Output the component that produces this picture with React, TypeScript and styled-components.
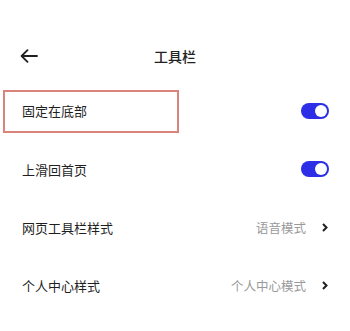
import React from "react";
import styled, { createGlobalStyle } from "styled-components";

const Global = createGlobalStyle`
  html, body { margin: 0; padding: 0; background: #ffffff; }
  body { font-family: "Noto Sans CJK SC", "Noto Sans", sans-serif; color: #1f1f1f; }
`;

const Page = styled.div`
  width: 350px;
  height: 331px;
  background: #fff;
  overflow: hidden;
  display: flex;
  flex-direction: column;
`;

const Header = styled.div`
  margin-top: 38px;
  height: 36px;
  display: grid;
  grid-template-columns: 60px 1fr 60px;
  align-items: center;
`;

const BackButton = styled.div`
  padding-left: 20px;
  display: flex;
  align-items: center;
`;

const Title = styled.div`
  text-align: center;
  font-size: 14px;
  font-weight: 500;
  color: #222;
`;

const List = styled.div`
  margin-top: 8px;
  display: flex;
  flex-direction: column;
`;

const Row = styled.div`
  height: 58px;
  display: flex;
  align-items: center;
  justify-content: space-between;
  padding-right: 21px;
`;

const Label = styled.div<{ $highlight?: boolean }>`
  box-sizing: border-box;
  display: flex;
  align-items: center;
  font-size: 13px;
  color: #1f1f1f;
  ${(p) =>
    p.$highlight
      ? `
    margin-left: 3px;
    width: 176px;
    height: 43px;
    border: 2px solid #d9837b;
    padding-left: 17px;
    padding-bottom: 1px;
  `
      : `
    padding-left: 22px;
  `}
`;

const Toggle = styled.div<{ $on: boolean }>`
  width: 28px;
  height: 16px;
  border-radius: 8px;
  background: ${(p) => (p.$on ? "#2c2fe5" : "#ccc")};
  display: flex;
  align-items: center;
  justify-content: ${(p) => (p.$on ? "flex-end" : "flex-start")};
  padding: 0 2px;
  box-sizing: border-box;
`;

const Knob = styled.div`
  width: 12px;
  height: 12px;
  border-radius: 50%;
  background: #fff;
`;

const Right = styled.div`
  display: flex;
  align-items: center;
  gap: 16px;
  padding-right: 1px;
`;

const Value = styled.span`
  font-size: 12.5px;
  color: #9a9a9a;
`;

const Chevron = () => (
  <svg width="6" height="9" viewBox="0 0 6 9">
    <polyline points="1,1 4.5,4.5 1,8" fill="none" stroke="#1f1f1f" strokeWidth="2" />
  </svg>
);

const BackArrow = () => (
  <svg width="18" height="14" viewBox="0 0 18 14">
    <path d="M17 7H2M7.5 1.2L1.6 7l5.9 5.8" fill="none" stroke="#1f1f1f" strokeWidth="1.8" strokeLinecap="round" strokeLinejoin="round" />
  </svg>
);

export default function App() {
  return (
    <Page>
      <Global />
      <Header>
        <BackButton>
          <BackArrow />
        </BackButton>
        <Title>工具栏</Title>
        <div />
      </Header>
      <List>
        <Row>
          <Label $highlight>固定在底部</Label>
          <Toggle $on>
            <Knob />
          </Toggle>
        </Row>
        <Row>
          <Label>上滑回首页</Label>
          <Toggle $on>
            <Knob />
          </Toggle>
        </Row>
        <Row>
          <Label>网页工具栏样式</Label>
          <Right>
            <Value>语音模式</Value>
            <Chevron />
          </Right>
        </Row>
        <Row>
          <Label>个人中心样式</Label>
          <Right>
            <Value>个人中心模式</Value>
            <Chevron />
          </Right>
        </Row>
      </List>
    </Page>
  );
}
